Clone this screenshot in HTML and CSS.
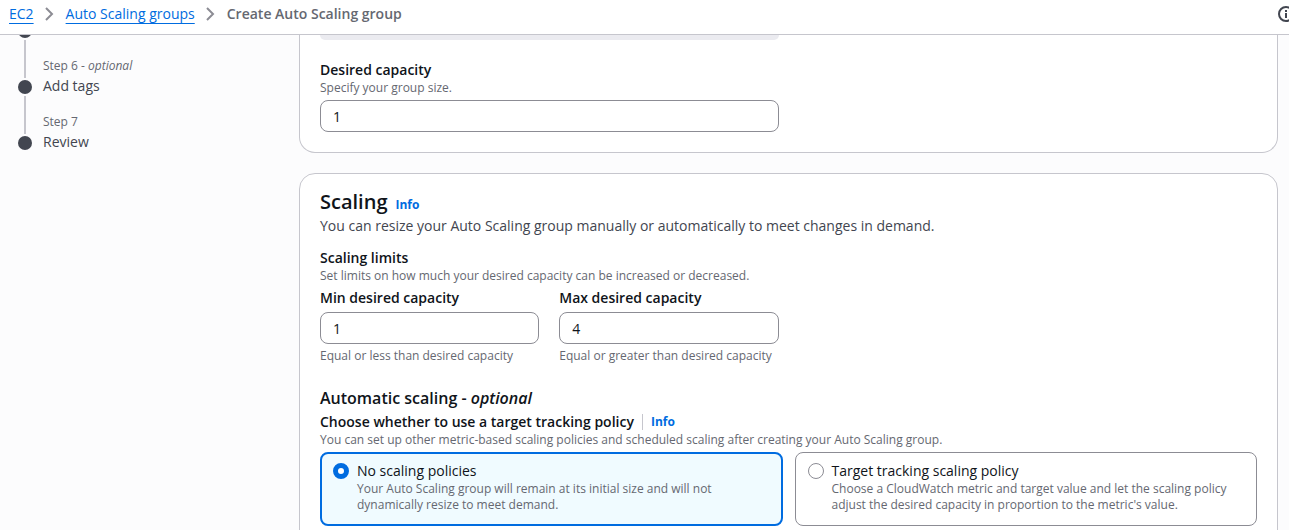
FILE: index.html
```html
<!DOCTYPE html>
<html lang="en">
<head>
<meta charset="utf-8">
<meta name="viewport" content="width=device-width, initial-scale=1">
<title>Create Auto Scaling group</title>
<link rel="stylesheet" href="styles.css">
</head>
<body>
<header class="topbar">
  <nav class="breadcrumbs" aria-label="Breadcrumbs">
    <a class="crumb" href="#ec2">EC2</a>
    <svg class="chevron" viewBox="0 0 12 14" aria-hidden="true"><path d="M2 1l6 6-6 6"/></svg>
    <a class="crumb" href="#groups">Auto Scaling groups</a>
    <svg class="chevron" viewBox="0 0 12 14" aria-hidden="true"><path d="M2 1l6 6-6 6"/></svg>
    <span class="current" aria-current="page">Create Auto Scaling group</span>
  </nav>
  <button class="info-button" type="button" aria-label="Open help panel">
    <svg viewBox="0 0 16 16" aria-hidden="true"><circle cx="8" cy="8" r="7"/><path d="M8 7v5M8 4v2"/></svg>
  </button>
</header>
<div class="layout">
  <aside class="steps">
    <div class="previous"><span class="dot"></span></div>
    <ol class="step-list">
      <li class="step">
        <div class="marker"><span class="line"></span><span class="dot"></span></div>
        <div class="step-text"><span class="step-number">Step 6 - <i>optional</i></span><span class="step-name">Add tags</span></div>
      </li>
      <li class="step">
        <div class="marker"><span class="line"></span><span class="dot"></span></div>
        <div class="step-text"><span class="step-number">Step 7</span><span class="step-name">Review</span></div>
      </li>
    </ol>
  </aside>
  <main class="content">
    <section class="card card-continued">
      <div class="halves">
        <div class="field-end"></div>
      </div>
      <div class="halves">
        <div class="field">
          <label class="label" for="desired">Desired capacity</label>
          <span class="hint">Specify your group size.</span>
          <input class="input" id="desired" type="text" inputmode="numeric" value="1">
        </div>
      </div>
    </section>
    <section class="card card-scaling">
      <div class="heading"><h2>Scaling</h2><a class="info" href="#scaling-info">Info</a></div>
      <p class="description">You can resize your Auto Scaling group manually or automatically to meet changes in demand.</p>
      <div class="limits">
        <h3 class="label">Scaling limits</h3>
        <span class="hint">Set limits on how much your desired capacity can be increased or decreased.</span>
        <div class="halves">
          <div class="halves">
            <div class="field">
              <label class="label" for="min">Min desired capacity</label>
              <input class="input" id="min" type="text" inputmode="numeric" value="1">
              <span class="hint note">Equal or less than desired capacity</span>
            </div>
            <div class="field">
              <label class="label" for="max">Max desired capacity</label>
              <input class="input" id="max" type="text" inputmode="numeric" value="4">
              <span class="hint note">Equal or greater than desired capacity</span>
            </div>
          </div>
        </div>
      </div>
      <h3 class="subheading">Automatic scaling - <i>optional</i></h3>
      <div class="policy-label"><span class="label" id="policy">Choose whether to use a target tracking policy</span><a class="info divided" href="#policy-info">Info</a></div>
      <span class="hint">You can set up other metric-based scaling policies and scheduled scaling after creating your Auto Scaling group.</span>
      <div class="tiles" role="radiogroup" aria-labelledby="policy">
        <label class="tile" for="none">
          <input class="radio" id="none" type="radio" name="policy" checked>
          <span class="tile-text"><span class="tile-title">No scaling policies</span><span class="hint">Your Auto Scaling group will remain at its initial size and will not dynamically resize to meet demand.</span></span>
        </label>
        <label class="tile" for="tracking">
          <input class="radio" id="tracking" type="radio" name="policy">
          <span class="tile-text"><span class="tile-title">Target tracking scaling policy</span><span class="hint">Choose a CloudWatch metric and target value and let the scaling policy adjust the desired capacity in proportion to the metric's value.</span></span>
        </label>
      </div>
    </section>
  </main>
</div>
</body>
</html>
```
FILE: styles.css
```css
* { box-sizing: border-box; }
body {
  margin: 0;
  height: 100vh;
  overflow: hidden;
  background: #fcfcfd;
  color: #0f141a;
  font: 14px/20px "Open Sans", "Noto Sans", sans-serif;
}
h2, h3, p, ol { margin: 0; padding: 0; }

.topbar {
  display: flex;
  align-items: center;
  justify-content: space-between;
  height: 35px;
  padding-left: 9px;
  padding-bottom: 6px;
  background: #fff;
  border-bottom: 1px solid #c6c6cd;
  overflow: hidden;
}
.breadcrumbs { display: flex; align-items: center; gap: 10px; white-space: nowrap; }
.crumb { color: #006ce0; text-underline-offset: 4px; text-decoration-thickness: 1px; }
.chevron { width: 12px; height: 14px; fill: none; stroke: #8c8c94; stroke-width: 2; }
.current { color: #656871; font-weight: 600; }
.info-button { flex: none; width: 16px; height: 16px; margin-right: -5px; padding: 0; border: 0; background: none; }
.info-button svg { display: block; width: 16px; height: 16px; fill: none; stroke: #424650; stroke-width: 2; }

.layout { display: flex; }
.steps { flex: none; width: 299px; padding-left: 18px; }
.previous { display: flex; align-items: flex-end; height: 3px; overflow: hidden; margin-bottom: 2px; }
.step-list { list-style: none; }
.step { display: flex; gap: 11px; }
.marker { display: flex; flex-direction: column; align-items: center; gap: 2px; width: 14px; padding-bottom: 2px; }
.line { flex: 1; width: 2px; background: #c6c6cd; }
.dot { flex: none; width: 14px; height: 14px; border-radius: 50%; background: #424650; }
.step-text { display: flex; flex-direction: column; gap: 2px; padding-top: 18px; color: #424650; }
.step-number { font-size: 12px; line-height: 16px; color: #656871; }

.content { flex: 1; min-width: 0; display: flex; flex-direction: column; gap: 20px; padding-right: 11px; }
.card { padding: 16px 20px 20px; background: #fff; border: 1px solid #c6c6cd; border-radius: 16px; }
.card-continued { display: flex; flex-direction: column; gap: 20px; padding-top: 0; border-top: 0; border-radius: 0 0 16px 16px; }
.halves { display: grid; grid-template-columns: 1fr 1fr; gap: 20px; }
.field-end { height: 5px; background: #ebebf0; border-radius: 0 0 8px 8px; }
.field { display: flex; flex-direction: column; min-width: 0; }
.label { font-size: 14px; line-height: 20px; font-weight: 600; }
.hint { display: block; font-size: 12px; line-height: 16px; color: #656871; }
.input {
  width: 100%;
  height: 32px;
  margin-top: 4px;
  padding: 4px 12px;
  border: 1px solid #8c8c94;
  border-radius: 8px;
  background: #fff;
  color: #0f141a;
  font: inherit;
}
.note { margin-top: 4px; }

.heading { display: flex; align-items: baseline; gap: 8px; }
.heading h2 { font-size: 20px; line-height: 24px; font-weight: 600; }
.info { color: #006ce0; font-size: 12px; line-height: 16px; font-weight: 700; text-decoration: none; }
.description { margin-top: 2px; color: #424650; }
.limits { margin-top: 12px; }
.limits > .halves { margin-top: 4px; }
.subheading { margin-top: 24px; font-size: 16px; line-height: 20px; font-weight: 600; }
.policy-label { display: flex; align-items: center; gap: 8px; margin-top: 4px; }
.divided { padding-left: 8px; border-left: 1px solid #c6c6cd; }
.tiles { display: grid; grid-template-columns: 1fr 1fr; gap: 12px; margin-top: 4px; }
.tile { display: flex; gap: 8px; min-height: 74px; padding: 8px 12px; border: 1px solid #8c8c94; border-radius: 8px; background: #fff; }
.tile:has(:checked) { padding: 7px 11px; border: 2px solid #006ce0; background: #f0fbff; }
.radio { appearance: none; flex: none; width: 16px; height: 16px; margin: 2px 0 0; border: 1px solid #8c8c94; border-radius: 50%; background: #fff; }
.radio:checked { border: 5px solid #006ce0; }
.tile-title { display: block; }
```
